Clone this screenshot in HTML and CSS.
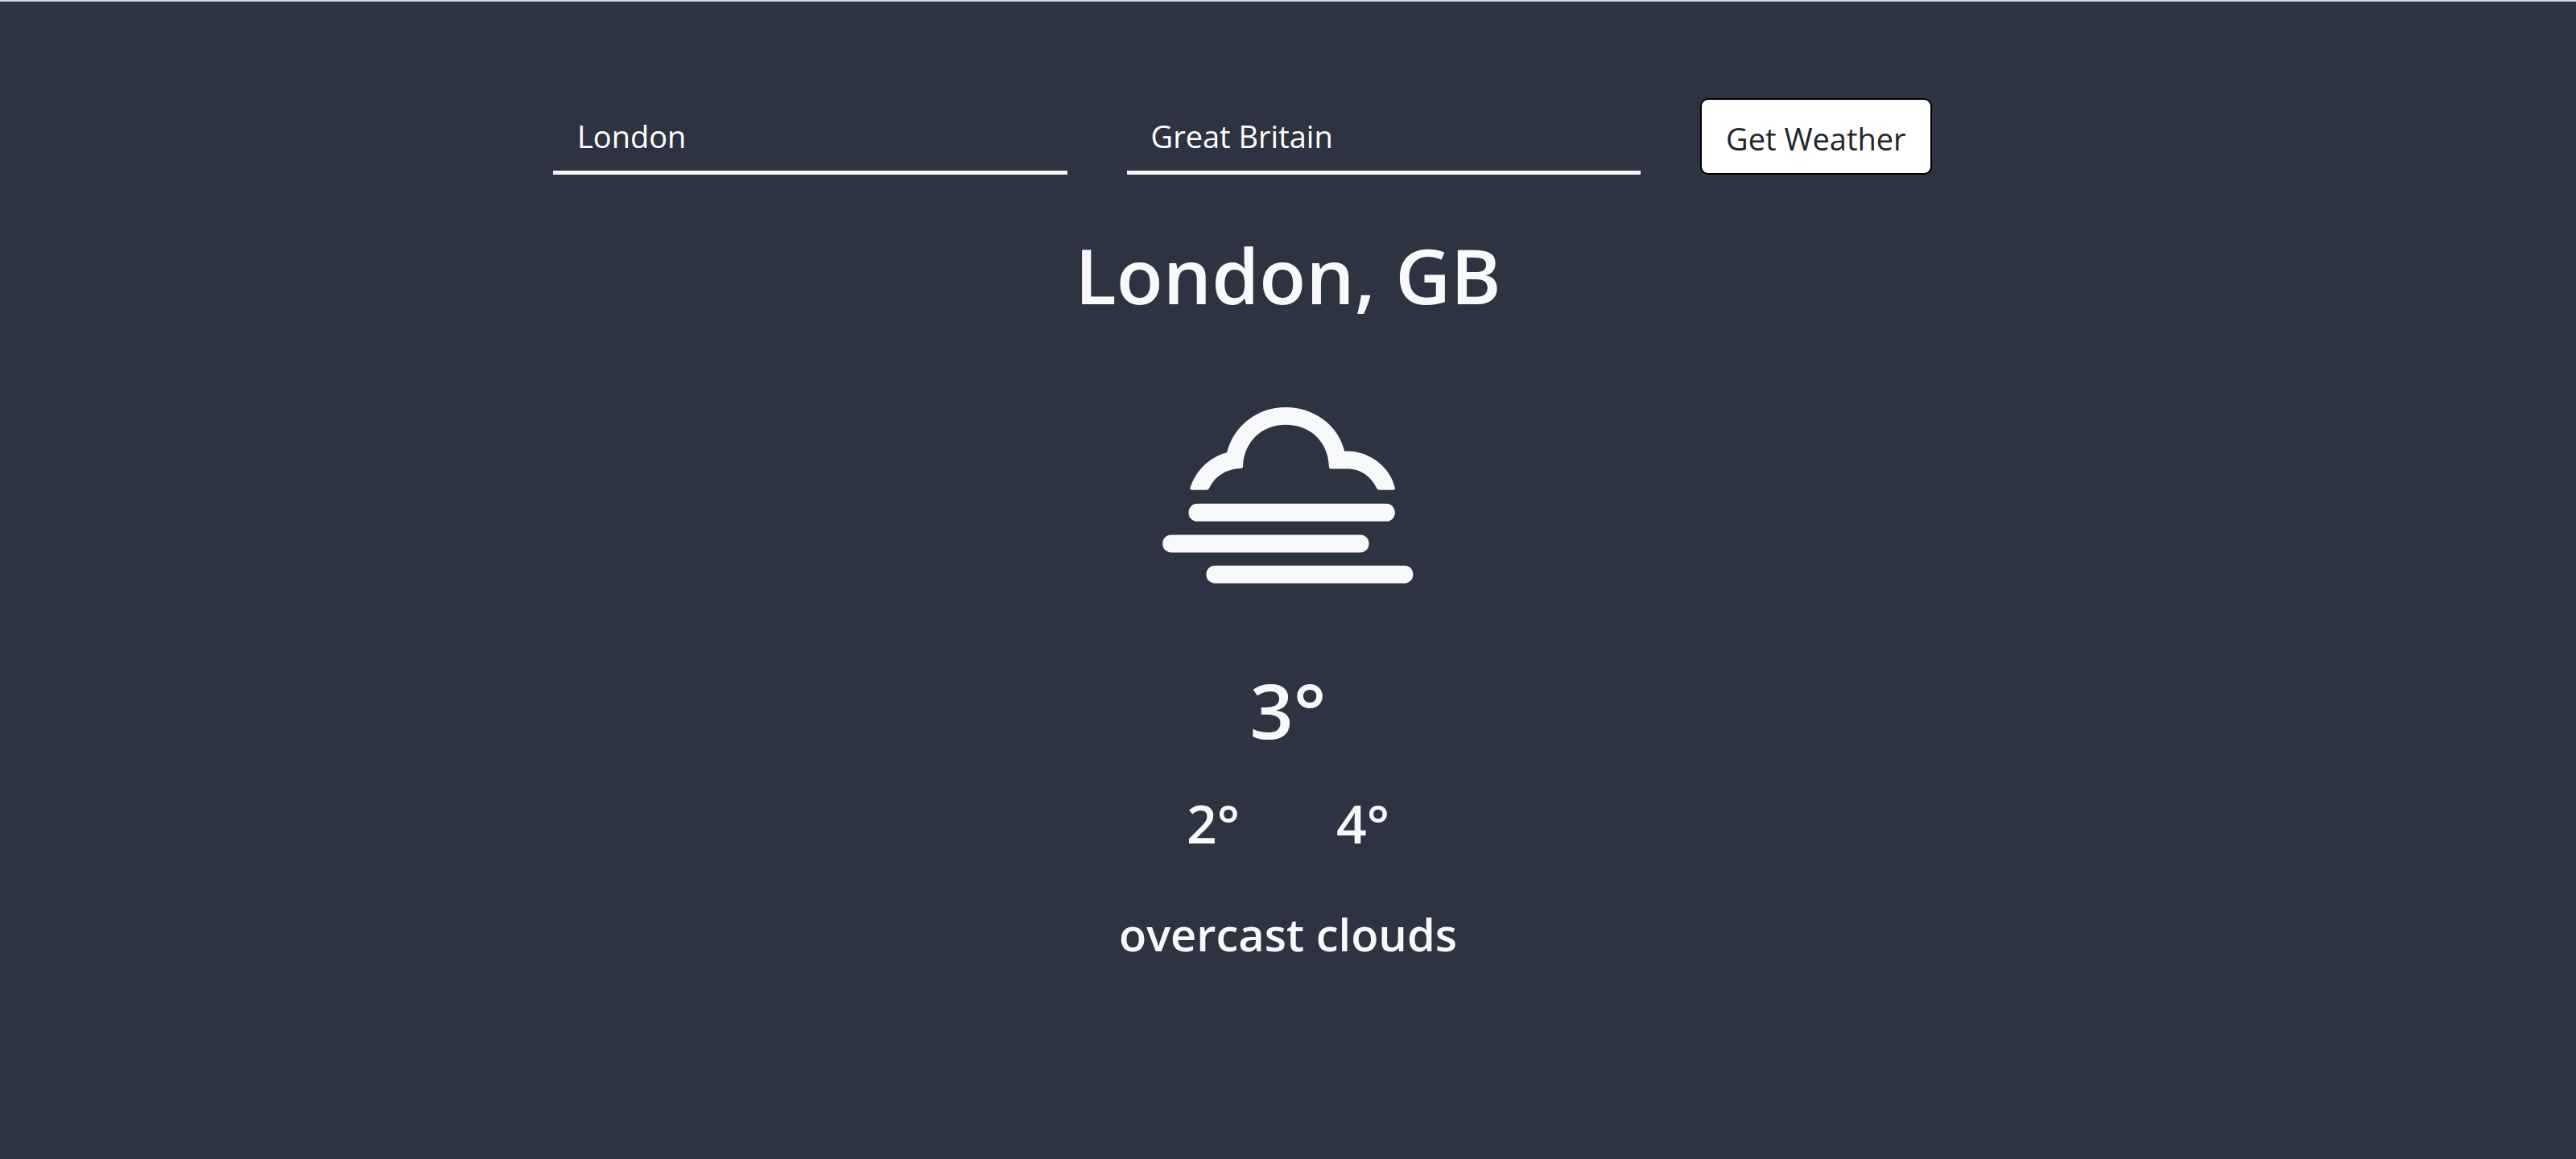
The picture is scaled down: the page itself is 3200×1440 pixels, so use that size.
FILE: index.html
```html
<!DOCTYPE html>
<html lang="en">
<head>
<meta charset="utf-8">
<title>Weather</title>
<link rel="stylesheet" href="styles.css">
</head>
<body>
<form class="search">
  <input class="field city" type="text" name="city" value="London" aria-label="City" autocomplete="off">
  <input class="field" type="text" name="country" value="Great Britain" aria-label="Country" autocomplete="off">
  <button class="submit" type="button">Get Weather</button>
</form>
<main class="weather">
  <h1 class="place">London, GB</h1>
  <svg class="icon" viewBox="75 78 936 658" aria-hidden="true">
    <path d="M184 387Q176 386 178 378C201 310 253 263 315 247C339 150 426 78 534 78C642 78 731 147 754 242C842 238 922 296 942 378Q943 387 937 387H884Q877 387 874 380C854 338 816 310 772 308H703Q697 308 696 302C694 205 625 143 534 143C443 143 377 210 375 299Q374 306 368 306C315 308 272 332 249 380Q246 387 238 387Z"/>
    <rect x="172" y="438" width="770" height="66" rx="32"/>
    <rect x="75" y="554" width="770" height="66" rx="32"/>
    <rect x="238" y="669" width="772" height="66" rx="32"/>
  </svg>
  <h1 class="temp">3°</h1>
  <div class="range">
    <span>2°</span>
    <span>4°</span>
  </div>
  <h4 class="description">overcast clouds</h4>
</main>
</body>
</html>
```
FILE: styles.css
```css
* {
  box-sizing: border-box;
}

body {
  margin: 0;
  min-height: 100vh;
  border-top: 2px solid #d3d8e0;
  background: #2e3341;
  color: #f8f9fa;
  font-family: "Segoe UI", "Open Sans", "Noto Sans", sans-serif;
  font-size: 38px;
}

.search {
  display: grid;
  grid-template-columns: repeat(12, 1fr);
  column-gap: 74px;
  max-width: 2776px;
  margin: 0 auto;
  padding-top: 120px;
}

.field {
  grid-column: span 3;
  width: 100%;
  height: 95px;
  padding: 4px 30px 0;
  border: 0;
  border-bottom: 5px solid #f4f5f6;
  border-radius: 0;
  background: transparent;
  color: #fff;
  font: inherit;
  outline: 0;
}

.city {
  grid-column: 3 / span 3;
}

.submit {
  grid-column: span 3;
  justify-self: start;
  height: 95px;
  padding: 4px 30px 0;
  border: 2px solid #000;
  border-radius: 10px;
  background: #fff;
  color: #212529;
  font: inherit;
}

.weather {
  display: flex;
  flex-direction: column;
  align-items: center;
  padding: 67px 0 80px;
  font-weight: 600;
  line-height: 1.2;
}

.place,
.temp,
.description {
  margin: 0;
  font-weight: 600;
}

.place,
.temp {
  font-size: 95px;
}

.icon {
  width: 312px;
  height: 219px;
  margin: 108px 0 99px;
  fill: #f8f9fa;
}

.range {
  display: flex;
  gap: 120px;
  margin: 45px 0 65px;
  font-size: 66px;
}

.description {
  font-size: 56px;
}
```
